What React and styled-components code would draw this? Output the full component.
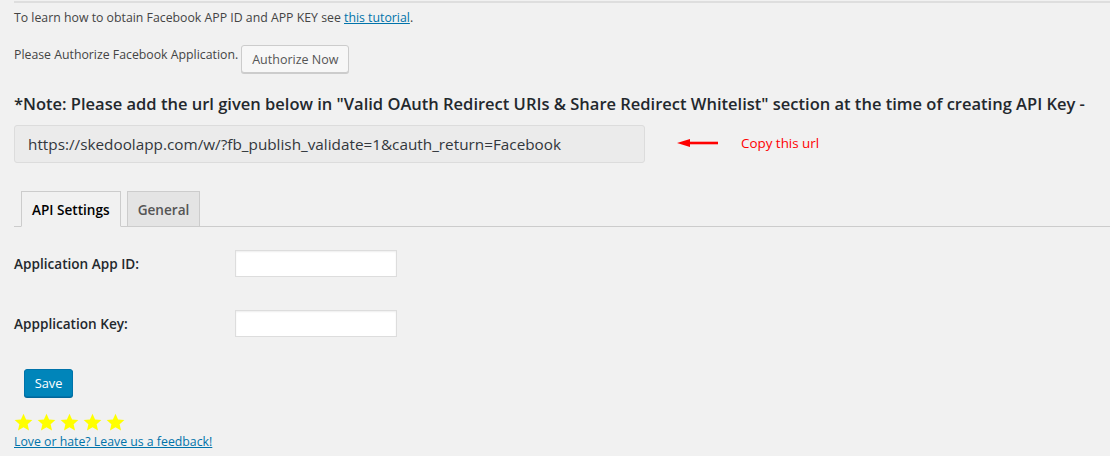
import React from "react";
import styled, { createGlobalStyle } from "styled-components";

const GlobalStyle = createGlobalStyle`
  body {
    margin: 0;
    background: #f1f1f1;
    font-family: "Open Sans", "Noto Sans", sans-serif;
    color: #444;
  }
`;

const Wrapper = styled.div`
  padding-left: 14px;
`;

const Content = styled.div`
  border-top: 2px solid #dedede;
  margin-top: 1px;
  padding-top: 5px;
`;

const Text = styled.p`
  margin: 0;
  font-size: 12.3px;
  line-height: 19px;
`;

const Link = styled.a`
  color: #0073aa;
  text-decoration: underline;
`;

const AuthRow = styled.div`
  display: flex;
  align-items: flex-start;
  margin-top: 18px;
`;

const Button = styled.button`
  font-family: inherit;
  font-size: 12.5px;
  height: 28px;
  padding: 0 10px;
  margin-left: 3px;
  border: 1px solid #ccc;
  border-radius: 3px;
  background: #f7f7f7;
  color: #555;
  box-shadow: 0 1px 0 #ccc;
`;

const Note = styled.h3`
  margin: 19px 0 0;
  font-size: 16.5px;
  font-weight: 600;
  line-height: 24px;
  color: #23282d;
  white-space: nowrap;
`;

const UrlRow = styled.div`
  display: flex;
  align-items: center;
  margin-top: 9px;
`;

const UrlBox = styled.div`
  box-sizing: border-box;
  width: 631px;
  height: 38px;
  padding: 0 13px;
  display: flex;
  align-items: center;
  background: #ebebeb;
  border: 1px solid #dcdcdc;
  border-radius: 3px;
  font-size: 15.3px;
  color: #32373c;
  white-space: nowrap;
`;

const Hint = styled.div`
  display: flex;
  align-items: center;
  margin: -2px 0 0 32px;
  color: #f00;
  font-size: 13.4px;
  gap: 22px;
`;

const Tabs = styled.div`
  display: flex;
  gap: 6px;
  margin-top: 28px;
  padding-left: 7px;
  border-bottom: 1px solid #ccc;
`;

const Tab = styled.div`
  box-sizing: border-box;
  height: 36px;
  margin-bottom: -1px;
  padding: 0 10px;
  display: flex;
  align-items: center;
  font-size: 13.6px;
  font-weight: 600;
  border: 1px solid #ccc;
  border-bottom-color: ${p => (p.active ? "#f1f1f1" : "#ccc")};
  background: ${p => (p.active ? "#f1f1f1" : "#e4e4e4")};
  color: ${p => (p.active ? "#000" : "#555")};
`;

const Form = styled.div`
  display: grid;
  grid-template-columns: 221px 162px;
  row-gap: 33px;
  margin-top: 23px;
  align-items: center;
`;

const Label = styled.label`
  font-size: 13.6px;
  font-weight: 600;
  color: #23282d;
`;

const Input = styled.input`
  box-sizing: border-box;
  width: 162px;
  height: 27px;
  border: 1px solid #ddd;
  background: #fff;
  box-shadow: inset 0 1px 2px rgba(0, 0, 0, 0.07);
`;

const SaveButton = styled.button`
  font-family: inherit;
  font-size: 12.8px;
  height: 28px;
  width: 49px;
  margin: 32px 0 0 10px;
  padding: 0;
  border: 1px solid #0073aa;
  border-radius: 3px;
  background: #0085ba;
  color: #fff;
  box-shadow: 0 1px 0 #006799;
`;

const Stars = styled.div`
  display: flex;
  gap: 4px;
  margin-top: 16px;
`;

const Footer = styled.div`
  margin-top: 0;
`;

const Star = () => (
  <svg width="19" height="19" viewBox="0 0 24 24">
    <path
      d="M12 0.8l3.3 7.3 7.9.8-6 5.3 1.8 8L12 18.1l-7 4.1 1.8-8-6-5.3 7.9-.8z"
      fill="#ffff00"
    />
  </svg>
);

const Arrow = () => (
  <svg width="42" height="10" viewBox="0 0 42 10">
    <path d="M12 5H41" stroke="#f00" strokeWidth="2.6" />
    <path d="M0 5L13 1V9z" fill="#f00" />
  </svg>
);

export default function App() {
  return (
    <Wrapper>
      <GlobalStyle />
      <Content>
        <Text>
          To learn how to obtain Facebook APP ID and APP KEY see{" "}
          <Link href="#">this tutorial</Link>.
        </Text>
        <AuthRow>
          <Text>Please Authorize Facebook Application.</Text>
          <Button>Authorize Now</Button>
        </AuthRow>
        <Note>
          *Note: Please add the url given below in "Valid OAuth Redirect URIs &amp; Share Redirect
          Whitelist" section at the time of creating API Key -
        </Note>
        <UrlRow>
          <UrlBox>https://skedoolapp.com/w/?fb_publish_validate=1&amp;cauth_return=Facebook</UrlBox>
          <Hint>
            <Arrow />
            <span>Copy this url</span>
          </Hint>
        </UrlRow>
        <Tabs>
          <Tab active>API Settings</Tab>
          <Tab>General</Tab>
        </Tabs>
        <Form>
          <Label>Application App ID:</Label>
          <Input type="text" />
          <Label>Appplication Key:</Label>
          <Input type="text" />
        </Form>
        <SaveButton>Save</SaveButton>
        <Footer>
          <Stars>
            <Star />
            <Star />
            <Star />
            <Star />
            <Star />
          </Stars>
          <Text>
            <Link href="#">Love or hate? Leave us a feedback!</Link>
          </Text>
        </Footer>
      </Content>
    </Wrapper>
  );
}
